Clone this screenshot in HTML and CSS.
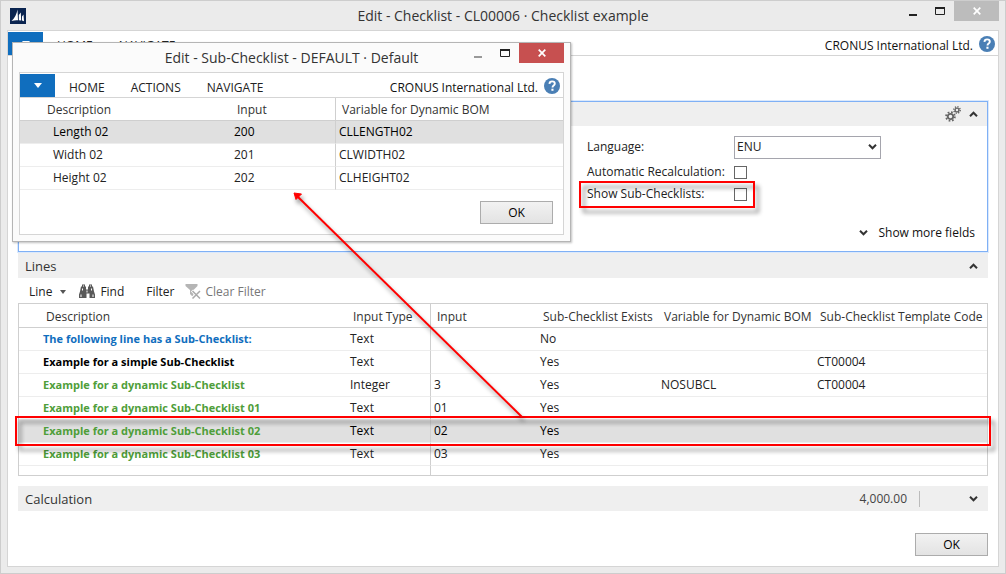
FILE: index.html
```html
<!DOCTYPE html>
<html lang="en">
<head>
<meta charset="utf-8">
<title>Edit - Checklist - CL00006 · Checklist example</title>
<link rel="stylesheet" href="styles.css">
</head>
<body>
<svg class="symbols" aria-hidden="true">
  <symbol id="i-help" viewBox="0 0 16 16">
    <circle cx="8" cy="8" r="8" fill="#4a7fb5"/>
    <path d="M5.4 5.9C5.5 4.3 6.6 3.4 8.1 3.4c1.6 0 2.7.9 2.7 2.3 0 1.8-2.3 1.9-2.3 3.7" fill="none" stroke="#fff" stroke-width="1.9"/>
    <rect x="7.4" y="10.7" width="2.1" height="2.1" fill="#fff"/>
  </symbol>
  <symbol id="i-up" viewBox="0 0 9 6">
    <path d="M1 5.2 4.5 1.7 8 5.2" fill="none" stroke="#333" stroke-width="2"/>
  </symbol>
  <symbol id="i-down" viewBox="0 0 9 6">
    <path d="M1 .8 4.5 4.3 8 .8" fill="none" stroke="#333" stroke-width="2"/>
  </symbol>
  <symbol id="i-min" viewBox="0 0 11 9">
    <path d="M1 8h8" stroke="currentColor" stroke-width="2"/>
  </symbol>
  <symbol id="i-max" viewBox="0 0 11 9">
    <path d="M.5 0v7.500h9V0" fill="none" stroke="currentColor"/>
    <path d="M0 1h10" stroke="currentColor" stroke-width="2"/>
  </symbol>
  <symbol id="i-close" viewBox="0 0 8 8">
    <path d="M.7.7l6.6 6.6M7.3.7.7 7.3" stroke="#fff" stroke-width="1.7"/>
  </symbol>
</svg>

<div class="window">
  <header class="titlebar">
    <svg class="logo" viewBox="0 0 16 16" role="img" aria-label="Dynamics NAV">
      <rect width="16" height="16" fill="#0a2450"/>
      <path d="M1.500 13C4.500 10.500 6.800 6 7.500 1.500L8 12.300C6 12 4 12.300 1.500 13z" fill="#fff"/>
      <path d="M8.800 12.300V7l2-2.500.4 8zM12 12.600V8.500l1.500-2 .5 6.800z" fill="#fff"/>
    </svg>
    <h1 class="title">Edit - Checklist - CL00006 · Checklist example</h1>
    <div class="controls">
      <button class="control" aria-label="Minimize"><svg class="control-icon"><use href="#i-min"/></svg></button>
      <button class="control" aria-label="Maximize"><svg class="control-icon"><use href="#i-max"/></svg></button>
      <button class="control close" aria-label="Close"><svg class="close-icon"><use href="#i-close"/></svg></button>
    </div>
  </header>

  <div class="client">
    <nav class="ribbon">
      <button class="app-menu" aria-label="Application menu"><span class="caret-white"></span></button>
      <button class="tab">HOME</button>
      <button class="tab">NAVIGATE</button>
      <span class="company">CRONUS International Ltd.</span>
      <button class="help" aria-label="Help"><svg class="help-icon"><use href="#i-help"/></svg></button>
    </nav>

    <main class="page">
      <section class="general">
        <div class="bar">
          <svg class="gears" viewBox="0 0 16 16" fill="none" stroke="#666" aria-hidden="true">
            <circle cx="5.500" cy="10.500" r="2.700" stroke-width="1.800"/>
            <circle cx="5.500" cy="10.500" r="4.400" stroke-width="1.800" stroke-dasharray="1.730 1.730"/>
            <circle cx="12" cy="4" r="1.900" stroke-width="1.400"/>
            <circle cx="12" cy="4" r="3.200" stroke-width="1.500" stroke-dasharray="1.250 1.260"/>
          </svg>
          <button class="toggle" aria-label="Collapse"><svg class="chevron"><use href="#i-up"/></svg></button>
        </div>
        <div class="fields">
          <div class="field">
            <label class="field-label" for="language">Language:</label>
            <div class="select-wrap">
              <select class="select" id="language"><option>ENU</option></select>
              <svg class="chevron select-chevron" aria-hidden="true"><use href="#i-down"/></svg>
            </div>
          </div>
          <div class="field check">
            <label class="field-label" for="recalc">Automatic Recalculation:</label>
            <input class="box" type="checkbox" id="recalc">
          </div>
          <div class="field check">
            <label class="field-label" for="subs">Show Sub-Checklists:</label>
            <input class="box" type="checkbox" id="subs">
            <span class="mark mark-field"></span>
          </div>
          <button class="more"><svg class="chevron" aria-hidden="true"><use href="#i-down"/></svg>Show more fields</button>
        </div>
      </section>

      <section class="lines">
        <div class="bar">
          <h2 class="bar-title">Lines</h2>
          <button class="toggle" aria-label="Collapse"><svg class="chevron"><use href="#i-up"/></svg></button>
        </div>
        <div class="toolbar">
          <button class="tool">Line<span class="caret"></span></button>
          <button class="tool find">
            <svg class="tool-icon" viewBox="0 0 16 14" fill="#595959" aria-hidden="true">
              <path d="M3 0h3v2h1v3h2V2h1V0h3v2h1l1 5 1 3v3.500h-5.500V9h-3v4.500H0V10l1-3 1-5h1z"/>
              <path d="M4 1v1h1V1zM11 1v1h1V1zM3 4v2h1V4zM12 4v2h1V4zM1.500 10v2.500h1V10zM13.500 10v2.500h1V10zM7.500 6v2h1V6z" fill="#fff"/>
            </svg>Find</button>
          <button class="tool">Filter</button>
          <button class="tool muted">
            <svg class="tool-icon" viewBox="0 0 15 15" aria-hidden="true">
              <path d="M0 0h12v2L8 6v7.500L4.500 10V6L0 2z" fill="#b5b5b5"/>
              <path d="M6.500 6.500l8 8M14.500 6.500l-8 8" stroke="#fff" stroke-width="3"/>
              <path d="M7 7l7.500 7.500M14.500 7L7 14.500" stroke="#aaa" stroke-width="1.500"/>
            </svg>Clear Filter</button>
        </div>
        <div class="grid-wrap">
          <table class="grid">
            <colgroup><col class="c-desc"><col class="c-type"><col class="c-input"><col class="c-exists"><col class="c-var"><col></colgroup>
            <thead>
              <tr><th>Description</th><th>Input Type</th><th class="split">Input</th><th>Sub-Checklist Exists</th><th>Variable for Dynamic BOM</th><th>Sub-Checklist Template Code</th></tr>
            </thead>
            <tbody>
              <tr><td class="strong blue">The following line has a Sub-Checklist:</td><td>Text</td><td class="split"></td><td>No</td><td></td><td></td></tr>
              <tr><td class="strong">Example for a simple Sub-Checklist</td><td>Text</td><td class="split"></td><td>Yes</td><td></td><td>CT00004</td></tr>
              <tr><td class="strong green">Example for a dynamic Sub-Checklist</td><td>Integer</td><td class="split">3</td><td>Yes</td><td>NOSUBCL</td><td>CT00004</td></tr>
              <tr><td class="strong green">Example for a dynamic Sub-Checklist 01</td><td>Text</td><td class="split">01</td><td>Yes</td><td></td><td></td></tr>
              <tr class="selected"><td class="strong green">Example for a dynamic Sub-Checklist 02</td><td>Text</td><td class="split">02</td><td>Yes</td><td></td><td></td></tr>
              <tr><td class="strong green">Example for a dynamic Sub-Checklist 03</td><td>Text</td><td class="split">03</td><td>Yes</td><td></td><td></td></tr>
              <tr class="filler"><td></td><td></td><td class="split"></td><td></td><td></td><td></td></tr>
            </tbody>
          </table>
          <span class="mark mark-row"></span>
        </div>
      </section>

      <section class="bar calculation">
        <h2 class="bar-title">Calculation</h2>
        <span class="amount">4,000.00</span>
        <button class="toggle" aria-label="Expand"><svg class="chevron"><use href="#i-down"/></svg></button>
      </section>

      <footer class="actions"><button class="ok">OK</button></footer>
    </main>
  </div>
</div>

<div class="dialog" role="dialog" aria-labelledby="dialog-title">
  <header class="titlebar dialog-titlebar">
    <h2 class="title" id="dialog-title">Edit - Sub-Checklist - DEFAULT · Default</h2>
    <div class="controls">
      <button class="control faded" aria-label="Minimize"><svg class="control-icon"><use href="#i-min"/></svg></button>
      <button class="control" aria-label="Maximize"><svg class="control-icon"><use href="#i-max"/></svg></button>
      <button class="control close active" aria-label="Close"><svg class="close-icon"><use href="#i-close"/></svg></button>
    </div>
  </header>
  <div class="client dialog-client">
    <nav class="ribbon">
      <button class="app-menu" aria-label="Application menu"><span class="caret-white"></span></button>
      <button class="tab">HOME</button>
      <button class="tab">ACTIONS</button>
      <button class="tab">NAVIGATE</button>
      <span class="company">CRONUS International Ltd.</span>
      <button class="help" aria-label="Help"><svg class="help-icon"><use href="#i-help"/></svg></button>
    </nav>
    <table class="grid sub-grid">
      <colgroup><col class="s-desc"><col class="s-input"><col></colgroup>
      <thead><tr><th>Description</th><th>Input</th><th class="split">Variable for Dynamic BOM</th></tr></thead>
      <tbody>
        <tr class="selected"><td>Length 02</td><td>200</td><td class="split">CLLENGTH02</td></tr>
        <tr><td>Width 02</td><td>201</td><td class="split">CLWIDTH02</td></tr>
        <tr><td>Height 02</td><td>202</td><td class="split">CLHEIGHT02</td></tr>
      </tbody>
    </table>
    <div class="dialog-actions"><button class="ok">OK</button></div>
  </div>
</div>

<svg class="arrow" viewBox="0 0 240 236" aria-hidden="true">
  <path d="M6 6l225 221" stroke="#f00" stroke-width="2"/>
  <path d="M3 3l7.500 1L5 9.500z" fill="#f00" stroke="#f00"/>
</svg>
</body>
</html>
```
FILE: styles.css
```css
* { box-sizing: border-box; }

body {
  margin: 0;
  font: 12px/16px "Segoe UI", "Open Sans", "Noto Sans", sans-serif;
  color: #222;
}

button, select, input { font: inherit; color: inherit; margin: 0; }
button { padding: 0; border: 0; background: none; }
h1, h2 { margin: 0; font-weight: 400; }
svg { display: block; flex: none; }

.symbols { position: absolute; width: 0; height: 0; }

/* Window frame */
.window {
  display: flex;
  flex-direction: column;
  min-height: 100vh;
  padding: 0 6px 6px;
  border: 1px solid #cdcdcd;
  background: #ebebeb;
}

.titlebar {
  display: grid;
  grid-template-columns: 1fr auto 1fr;
  align-items: center;
  height: 29px;
}

.logo { width: 16px; height: 16px; margin-left: 3px; }
.title { grid-column: 2; font-size: 14px; line-height: 29px; color: #333; }
.controls { grid-column: 3; display: flex; justify-self: end; align-self: start; }
.control { display: grid; place-items: center; width: 27px; height: 20px; }
.control-icon { width: 11px; height: 9px; }
.close { width: 45px; background: #bcbcbc; }
.close-icon { width: 8px; height: 8px; }
.active { background: #c75050; }
.faded { color: #999; }

.client {
  flex: 1;
  display: flex;
  flex-direction: column;
  border: 1px solid #d5d5d5;
  background: #fff;
}

/* Ribbon */
.ribbon {
  display: flex;
  align-items: center;
  height: 25px;
  padding: 6px 3px 0 0;
  border-bottom: 1px solid #d5d5d5;
}

.app-menu {
  display: grid;
  place-items: center;
  align-self: flex-end;
  width: 35px;
  height: 23px;
  background: #106ebe;
}

.caret-white { border: 4px solid transparent; border-top: 5px solid #fff; border-bottom: 0; }
.tab { margin-left: 14px; margin-right: 12px; }
.company { margin-left: auto; margin-right: 6px; color: #111; }
.help { margin-bottom: 4px; }
.help-icon { width: 16px; height: 16px; }

/* Page */
.page { display: flex; flex-direction: column; padding: 45px 10px 9px; }

.bar {
  display: flex;
  align-items: center;
  height: 25px;
  padding: 0 10px 0 7px;
  background: #efefef;
}

.bar-title { font-size: 13px; color: #333; }
.toggle { margin-left: auto; }
.chevron { width: 9px; height: 6px; }

.general { border: 1px solid #7fb0f5; box-shadow: 0 0 0 1px #dbe9fc; }
.general .bar { height: 24px; padding-right: 9px; }
.gears { width: 16px; height: 16px; margin-left: auto; margin-right: 8px; }
.gears + .toggle { margin-left: 0; }

.fields { display: grid; padding: 9px 12px 9px 568px; }
.field { display: flex; position: relative; align-items: center; height: 22px; }
.field-label { width: 147px; white-space: nowrap; }
.field:first-child { height: 24px; margin-bottom: 2px; }
.select-wrap { display: grid; width: 147px; align-items: center; }
.select-wrap > * { grid-area: 1 / 1; }

.select {
  appearance: none;
  height: 23px;
  padding: 0 2px;
  border: 1px solid #a5a5ad;
  border-radius: 0;
  background: #fff;
}

.select-chevron { justify-self: end; margin-right: 4px; pointer-events: none; }

.box {
  appearance: none;
  width: 13px;
  height: 13px;
  border: 1px solid #666;
  background: #fff;
}

.more {
  display: flex;
  align-items: center;
  justify-self: end;
  gap: 10px;
  margin-top: 19px;
  line-height: 18px;
  color: #111;
}

.lines { margin-top: 1px; }

.toolbar { display: flex; align-items: center; height: 25px; padding: 2px 0 0 11px; }
.tool { display: flex; align-items: center; margin-right: 22px; }
.tool:first-child { margin-right: 13px; }
.tool-icon { width: 16px; height: 15px; margin-right: 5px; }
.caret { margin-left: 8px; border: 3px solid transparent; border-top: 4px solid #555; border-bottom: 0; }
.muted { color: #777; }
.find + .tool { margin-right: 10px; }

/* Data grids */
.grid-wrap { position: relative; border: 1px solid #cfcfcf; }

.grid {
  width: 100%;
  table-layout: fixed;
  border-collapse: separate;
  border-spacing: 0;
}

.grid th, .grid td {
  height: 23px;
  padding: 0 0 0 3px;
  border-bottom: 1px solid #ededed;
  font-weight: 400;
  text-align: left;
  white-space: nowrap;
}

.grid th { height: 24px; padding-top: 2px; padding-left: 6px; border-bottom-color: #cfcfcf; color: #333; }
.grid .split { border-left: 1px solid #cfcfcf; }
.grid td:first-child { padding-left: 24px; }
.grid th:first-child { padding-left: 27px; }
.grid .selected td { background: #e0e0e0; color: #000; }
.grid .filler td { height: 9px; border-bottom: 0; }
.grid .strong { font-size: 11px; font-weight: 700; color: #000; }
.grid .blue { color: #106ebe; }
.grid .green, .grid .selected .green { color: #4f9e3a; }

.c-desc { width: 328px; }
.c-type { width: 83px; }
.c-input { width: 107px; }
.c-exists { width: 121px; }
.c-var { width: 156px; }

.calculation { margin-top: 10px; }
.amount { margin-left: auto; padding-right: 12px; border-right: 1px solid #bbb; color: #444; }
.amount + .toggle { margin-left: 49px; }

.actions { display: flex; justify-content: flex-end; margin-top: 22px; }

.ok {
  width: 73px;
  height: 23px;
  border: 1px solid #acacac;
  background: linear-gradient(#f2f2f2, #e3e3e3);
  color: #000;
}

/* Sub-checklist dialog */
.dialog {
  position: absolute;
  left: 12px;
  top: 42px;
  width: 559px;
  padding: 0 6px 6px;
  border: 1px solid #b5b5b5;
  background: #fbfbfb;
  box-shadow: 1px 1px 2px rgba(0, 0, 0, .25);
}

.dialog-client { min-height: 163px; }
.grid.sub-grid th { height: 23px; }
.grid.sub-grid td:first-child { padding-left: 33px; }
.s-desc { width: 211px; }
.s-input { width: 104px; }
.dialog-actions { display: flex; justify-content: flex-end; padding: 11px 10px 9px; }

/* Red callouts */
.mark {
  position: absolute;
  border: 2px solid #f00;
  filter: drop-shadow(4px 5px 2px rgba(0, 0, 0, .45));
  pointer-events: none;
}

.mark-field { left: -8px; top: -2px; width: 176px; height: 27px; }
.mark-row { left: -4px; right: -4px; top: 112px; height: 30px; }

.arrow {
  position: absolute;
  left: 291px;
  top: 190px;
  width: 240px;
  height: 236px;
  filter: drop-shadow(2px 4px 2px rgba(0, 0, 0, .4));
  pointer-events: none;
}
```
